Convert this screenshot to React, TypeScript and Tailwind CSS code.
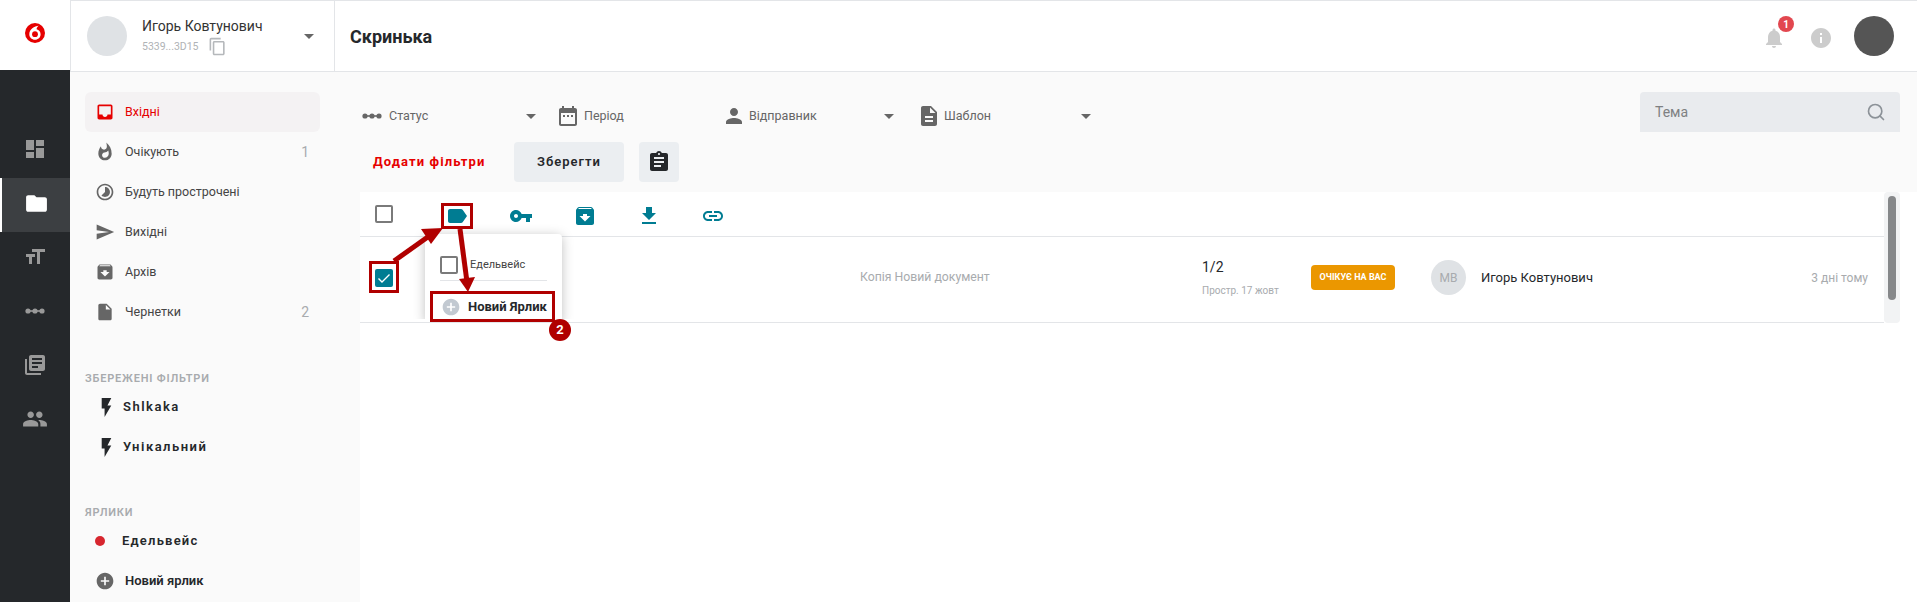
import React from 'react';
import { Search } from 'lucide-react';

const paths = {
  dashboard: 'M3 13h8V3H3v10zm0 8h8v-6H3v6zm10 0h8V11h-8v10zm0-18v6h8V3h-8z',
  folder: 'M10 4H4c-1.1 0-1.99.9-1.99 2L2 18c0 1.1.9 2 2 2h16c1.1 0 2-.9 2-2V8c0-1.1-.9-2-2-2h-8l-2-2z',
  size: 'M9 4v3h5v12h3V7h5V4H9zm-6 8h3v7h3v-7h3V9H3v3z',
  books: 'M4 6H2v14c0 1.1.9 2 2 2h14v-2H4V6zm16-4H8c-1.1 0-2 .9-2 2v12c0 1.1.9 2 2 2h12c1.1 0 2-.9 2-2V4c0-1.1-.9-2-2-2zm-1 9H9V9h10v2zm-4 4H9v-2h6v2zm4-8H9V5h10v2z',
  people: 'M16 11c1.66 0 2.99-1.34 2.99-3S17.66 5 16 5c-1.66 0-3 1.34-3 3s1.34 3 3 3zm-8 0c1.66 0 2.99-1.34 2.99-3S9.66 5 8 5C6.34 5 5 6.34 5 8s1.34 3 3 3zm0 2c-2.33 0-7 1.17-7 3.5V19h14v-2.5c0-2.33-4.67-3.5-7-3.5zm8 0c-.29 0-.62.02-.97.05 1.16.84 1.97 1.97 1.97 3.45V19h6v-2.5c0-2.33-4.67-3.5-7-3.5z',
  inbox: 'M19 3H5c-1.1 0-2 .9-2 2v14c0 1.1.9 2 2 2h14c1.1 0 2-.9 2-2V5c0-1.1-.9-2-2-2zm0 12h-4c0 1.66-1.35 3-3 3s-3-1.34-3-3H5V5h14v10z',
  fire: 'M13.5.67s.74 2.65.74 4.8c0 2.06-1.35 3.73-3.41 3.73-2.07 0-3.63-1.67-3.63-3.73l.03-.36C5.21 7.51 4 10.62 4 14c0 4.42 3.58 8 8 8s8-3.58 8-8C20 8.61 17.41 3.8 13.5.67zM11.71 19c-1.78 0-3.22-1.4-3.22-3.14 0-1.62 1.05-2.76 2.81-3.12 1.77-.36 3.6-1.21 4.62-2.58.39 1.29.59 2.65.59 4.04 0 2.65-2.15 4.8-4.8 4.8z',
  timelapse: 'M16.24 7.76C15.07 6.59 13.54 6 12 6v6l-4.24 4.24c2.34 2.34 6.14 2.34 8.49 0 2.34-2.34 2.34-6.14-.01-8.48zM12 2C6.48 2 2 6.48 2 12s4.48 10 10 10 10-4.48 10-10S17.52 2 12 2zm0 18c-4.42 0-8-3.58-8-8s3.58-8 8-8 8 3.58 8 8-3.58 8-8 8z',
  send: 'M2.01 21L23 12 2.01 3 2 10l15 2-15 2z',
  archive: 'M20.54 5.23l-1.39-1.68C18.88 3.21 18.47 3 18 3H6c-.47 0-.88.21-1.16.55L3.46 5.23C3.17 5.57 3 6.02 3 6.5V19c0 1.1.9 2 2 2h14c1.1 0 2-.9 2-2V6.5c0-.48-.17-.93-.46-1.27zM12 17.5L6.5 12H10v-2h4v2h3.5L12 17.5zM5.12 5l.81-1h12l.94 1H5.12z',
  draft: 'M6 2c-1.1 0-1.99.9-1.99 2L4 20c0 1.1.89 2 1.99 2H18c1.1 0 2-.9 2-2V8l-6-6H6zm7 7V3.5L18.5 9H13z',
  bolt: 'M7 2v11h3v9l7-12h-4l4-8z',
  plus: 'M12 2C6.48 2 2 6.48 2 12s4.48 10 10 10 10-4.48 10-10S17.52 2 12 2zm5 11h-4v4h-2v-4H7v-2h4V7h2v4h4v2z',
  calendar: 'M9 11H7v2h2v-2zm4 0h-2v2h2v-2zm4 0h-2v2h2v-2zm2-7h-1V2h-2v2H8V2H6v2H5c-1.11 0-1.99.9-1.99 2L3 20c0 1.1.89 2 2 2h14c1.1 0 2-.9 2-2V6c0-1.1-.9-2-2-2zm0 16H5V9h14v11z',
  person: 'M12 12c2.21 0 4-1.79 4-4s-1.79-4-4-4-4 1.79-4 4 1.79 4 4 4zm0 2c-2.67 0-8 1.34-8 4v2h16v-2c0-2.66-5.33-4-8-4z',
  template: 'M14 2H6c-1.1 0-1.99.9-1.99 2L4 20c0 1.1.89 2 1.99 2H18c1.1 0 2-.9 2-2V8l-6-6zm2 16H8v-2h8v2zm0-4H8v-2h8v2zm-3-5V3.5L18.5 9H13z',
  clipboard: 'M19 3h-4.18C14.4 1.84 13.3 1 12 1c-1.3 0-2.4.84-2.82 2H5c-1.1 0-2 .9-2 2v14c0 1.1.9 2 2 2h14c1.1 0 2-.9 2-2V5c0-1.1-.9-2-2-2zm-7 0c.55 0 1 .45 1 1s-.45 1-1 1-1-.45-1-1 .45-1 1-1zm2 14H7v-2h7v2zm3-4H7v-2h10v2zm0-4H7V7h10v2z',
  label: 'M17.63 5.84C17.27 5.33 16.67 5 16 5L5 5.01C3.9 5.01 3 5.9 3 7v10c0 1.1.9 1.99 2 1.99L16 19c.67 0 1.27-.33 1.63-.84L22 12l-4.37-6.16z',
  key: 'M12.65 10C11.83 7.67 9.61 6 7 6c-3.31 0-6 2.69-6 6s2.69 6 6 6c2.61 0 4.83-1.67 5.65-4H17v4h4v-4h2v-4H12.65zM7 14c-1.1 0-2-.9-2-2s.9-2 2-2 2 .9 2 2-.9 2-2 2z',
  download: 'M19 9h-4V3H9v6H5l7 7 7-7zM5 18v2h14v-2H5z',
  link: 'M3.9 12c0-1.71 1.39-3.1 3.1-3.1h4V7H7c-2.76 0-5 2.24-5 5s2.24 5 5 5h4v-1.9H7c-1.71 0-3.1-1.39-3.1-3.1zM8 13h8v-2H8v2zm9-6h-4v1.9h4c1.71 0 3.1 1.39 3.1 3.1s-1.39 3.1-3.1 3.1h-4V17h4c2.76 0 5-2.24 5-5s-2.24-5-5-5z',
  copy: 'M16 1H4c-1.1 0-2 .9-2 2v14h2V3h12V1zm3 4H8c-1.1 0-2 .9-2 2v14c0 1.1.9 2 2 2h11c1.1 0 2-.9 2-2V7c0-1.1-.9-2-2-2zm0 16H8V7h11v14z',
  bell: 'M12 22c1.1 0 2-.9 2-2h-4c0 1.1.89 2 2 2zm6-6v-5c0-3.07-1.64-5.64-4.5-6.32V4c0-.83-.67-1.5-1.5-1.5s-1.5.67-1.5 1.5v.68C7.63 5.36 6 7.92 6 11v5l-2 2v1h16v-1l-2-2z',
  info: 'M12 2C6.48 2 2 6.48 2 12s4.48 10 10 10 10-4.48 10-10S17.52 2 12 2zm1 15h-2v-6h2v6zm0-8h-2V7h2v2z',
};

const Icon = ({ name, className }: { name: keyof typeof paths; className: string }) => (
  <svg viewBox="0 0 24 24" fill="currentColor" className={className}>
    <path d={paths[name]} />
  </svg>
);

// three linked dots, used for the status filter and in the rail
const Dots = ({ className }: { className: string }) => (
  <svg viewBox="0 0 20 6" fill="currentColor" className={className}>
    <circle cx="3" cy="3" r="2.6" />
    <circle cx="10" cy="3" r="2.6" />
    <circle cx="17" cy="3" r="2.6" />
    <rect x="3" y="2.2" width="14" height="1.6" />
  </svg>
);

const Caret = () => <span className="h-0 w-0 border-x-[5px] border-t-[5px] border-x-transparent border-t-[#666]" />;

const Checkbox = ({ checked }: { checked?: boolean }) =>
  checked ? (
    <span className="flex h-[18px] w-[18px] items-center justify-center rounded-[2px] bg-[#007c92]">
      <svg viewBox="0 0 18 18" fill="none" stroke="#fff" strokeWidth="1.4" className="h-[18px] w-[18px]">
        <path d="M3.500 9.500l3.500 3.500 7.500-7.500" />
      </svg>
    </span>
  ) : (
    <span className="block h-[18px] w-[18px] rounded-[2px] border-2 border-[#7a7a7a] bg-white" />
  );

const railItems = [
  { icon: <Icon name="dashboard" className="h-[24px] w-[24px]" /> },
  { icon: <Icon name="folder" className="h-[25px] w-[25px] text-white" />, active: true },
  { icon: <Icon name="size" className="h-[24px] w-[24px]" /> },
  { icon: <Dots className="h-[6px] w-[20px]" /> },
  { icon: <Icon name="books" className="h-[24px] w-[24px]" /> },
  { icon: <Icon name="people" className="h-[26px] w-[26px]" /> },
];

const menuItems: { icon: keyof typeof paths; label: string; count?: string; active?: boolean }[] = [
  { icon: 'inbox', label: 'Вхідні', active: true },
  { icon: 'fire', label: 'Очікують', count: '1' },
  { icon: 'timelapse', label: 'Будуть прострочені' },
  { icon: 'send', label: 'Вихідні' },
  { icon: 'archive', label: 'Архів' },
  { icon: 'draft', label: 'Чернетки', count: '2' },
];

const toolbarIcons: (keyof typeof paths)[] = ['label', 'key', 'archive', 'download', 'link'];

const App = () => {
  return (
    <div className="relative flex h-[602px] w-full overflow-hidden bg-white font-['Roboto',sans-serif] text-[14px] text-[#25282b]">
      {/* Rail */}
      <div className="flex w-[70px] shrink-0 flex-col">
        <div className="flex h-[70px] items-center justify-center bg-white pb-[4px]">
          <svg viewBox="0 0 20 20" className="h-[20px] w-[20px]">
            <circle cx="10" cy="10" r="10" fill="#e60000" />
            <path d="M13.800 2.800C9.300 3.300 4.300 6.300 4.300 11.200c0 3.100 2.500 5.500 5.700 5.500 3.100 0 5.600-2.300 5.600-5.500 0-2.600-1.700-4.300-4-5 .1-1.500 1-2.700 2.200-3.400z" fill="#fff" />
            <circle cx="10" cy="11.200" r="2.900" fill="#e60000" />
          </svg>
        </div>
        <div className="flex-1 bg-[#25282b] pt-[54px] text-[#999]">
          {railItems.map((item, i) => (
            <div
              key={i}
              className={`flex h-[54px] items-center justify-center pb-[4px] ${item.active ? 'border-l-2 border-white bg-[#3c3f42]' : ''}`}
            >
              {item.icon}
            </div>
          ))}
        </div>
      </div>

      <div className="flex min-w-0 flex-1 flex-col">
        {/* Header */}
        <div className="flex h-[72px] shrink-0 border-y border-[#e3e5e8] bg-white">
          <div className="flex w-[265px] items-center border-x border-[#e3e5e8] pl-[16px] pr-[20px]">
            <span className="h-[40px] w-[40px] rounded-full bg-[#dfe2e5]" />
            <div className="ml-[15px] flex-1">
              <div className="text-[14px] leading-[20px] text-[#333]">Игорь Ковтунович</div>
              <div className="mt-[1px] flex items-center text-[10.5px] text-[#b0b3b6]">
                5339...3D15
                <Icon name="copy" className="ml-[9px] h-[19px] w-[19px] text-[#b5b8bb]" />
              </div>
            </div>
            <Caret />
          </div>
          <div className="flex flex-1 items-center pl-[15px] text-[18px] font-bold text-[#25282b]">Скринька</div>
          <div className="flex items-center pr-[23px]">
            <div className="relative mr-[23px] mt-[4px] h-[24px] w-[24px]">
              <Icon name="bell" className="h-[24px] w-[24px] text-[#ccc]" />
              <span className="absolute -right-[8px] -top-[10px] flex h-[16px] w-[16px] items-center justify-center rounded-full bg-[#e2474f] text-[10px] font-bold text-white">
                1
              </span>
            </div>
            <Icon name="info" className="mr-[21px] mt-[4px] h-[24px] w-[24px] text-[#ccc]" />
            <span className="h-[40px] w-[40px] rounded-full bg-[#555]" />
          </div>
        </div>

        <div className="flex min-h-0 flex-1">
          {/* Sidebar */}
          <div className="w-[290px] shrink-0 bg-[#fafafa] pl-[15px] pr-[40px] pt-[20px]">
            {menuItems.map((item) => (
              <div
                key={item.label}
                className={`flex h-[40px] items-center rounded-[6px] pl-[10px] pr-[11px] text-[12.5px] ${item.active ? 'bg-[#f4f2f3] text-[#e60000]' : 'text-[#444]'}`}
              >
                <Icon name={item.icon} className={`h-[20px] w-[20px] ${item.active ? 'text-[#e60000]' : 'text-[#666]'}`} />
                <span className="ml-[10px] flex-1">{item.label}</span>
                {item.count && <span className="text-[14px] text-[#a8abae]">{item.count}</span>}
              </div>
            ))}
            <div className="mt-[39px] text-[11px] font-semibold leading-[16px] tracking-[0.8px] text-[#a8abae]">ЗБЕРЕЖЕНІ ФІЛЬТРИ</div>
            {['Shlkaka', 'Унікальний'].map((name) => (
              <div key={name} className="flex h-[40px] items-center pl-[10px] text-[13px] font-semibold tracking-[1.5px]">
                <Icon name="bolt" className="h-[23px] w-[23px]" />
                <span className="ml-[5px]">{name}</span>
              </div>
            ))}
            <div className="mt-[38px] text-[11px] font-semibold leading-[16px] tracking-[0.8px] text-[#a8abae]">ЯРЛИКИ</div>
            <div className="flex h-[40px] items-center pl-[10px] text-[13px] font-semibold tracking-[1.2px]">
              <span className="h-[10px] w-[10px] rounded-full bg-[#d7262e]" />
              <span className="ml-[17px]">Едельвейс</span>
            </div>
            <div className="flex h-[40px] items-center pl-[10px] text-[13px] font-semibold">
              <Icon name="plus" className="h-[20px] w-[20px] text-[#666]" />
              <span className="ml-[10px]">Новий ярлик</span>
            </div>
          </div>

          {/* Main */}
          <div className="flex min-w-0 flex-1 flex-col">
            <div className="h-[120px] shrink-0 bg-[#fafafa] pr-[17px] pt-[20px]">
              <div className="flex h-[40px] items-start text-[12.5px] text-[#666]">
                <div className="mt-[12px] flex h-[24px] w-[196px] items-center pl-[2px] pr-[20px]">
                  <Dots className="h-[6px] w-[20px] text-[#666]" />
                  <span className="ml-[7px] flex-1">Статус</span>
                  <Caret />
                </div>
                <div className="mt-[12px] flex h-[24px] w-[166px] items-center">
                  <Icon name="calendar" className="h-[24px] w-[24px] text-[#666]" />
                  <span className="ml-[4px]">Період</span>
                </div>
                <div className="mt-[12px] flex h-[24px] w-[195px] items-center pr-[23px]">
                  <Icon name="person" className="h-[24px] w-[24px] text-[#666]" />
                  <span className="ml-[3px] flex-1">Відправник</span>
                  <Caret />
                </div>
                <div className="mt-[12px] flex h-[24px] w-[178px] items-center pr-[4px]">
                  <Icon name="template" className="h-[24px] w-[24px] text-[#666]" />
                  <span className="ml-[3px] flex-1">Шаблон</span>
                  <Caret />
                </div>
                <div className="ml-auto flex h-[40px] w-[260px] items-center justify-between rounded-t-[4px] bg-[#e9ebee] pl-[15px] pr-[14px] text-[14px] text-[#7e8082]">
                  Тема
                  <Search className="h-[20px] w-[20px] text-[#8c9298]" strokeWidth={2} />
                </div>
              </div>
              <div className="mt-[10px] flex h-[40px] items-center pl-[13px]">
                <span className="w-[141px] text-[13px] font-bold tracking-[1.1px] text-[#e60000]">Додати фільтри</span>
                <button className="h-[40px] w-[110px] rounded-[4px] bg-[#ebeef1] text-[13px] font-semibold tracking-[1px]">Зберегти</button>
                <button className="ml-[15px] flex h-[40px] w-[40px] items-center justify-center rounded-[4px] bg-[#ebeef1]">
                  <Icon name="clipboard" className="h-[24px] w-[24px]" />
                </button>
              </div>
            </div>

            <div className="flex pr-[17px]">
              <div className="min-w-0 flex-1">
                <div className="flex h-[45px] items-center border-b-[1px] border-[#e3e5e8]">
                  <div className="w-[65px] pl-[15px]">
                    <Checkbox />
                  </div>
                  {toolbarIcons.map((name) => (
                    <div key={name} className="flex w-[64px] justify-center pt-[3px]">
                      <Icon name={name} className="h-[24px] w-[24px] text-[#007c92]" />
                    </div>
                  ))}
                </div>
                <div className="relative flex h-[86px] items-center border-b-[1px] border-[#e3e5e8] pb-[4px]">
                  <div className="w-[500px] pl-[15px]">
                    <Checkbox checked />
                  </div>
                  <div className="w-[342px] text-[12.25px] text-[#a8abae]">Копія Новий документ</div>
                  <div className="w-[109px]">
                    <div className="text-[#25282b]">1/2</div>
                    <div className="mt-[5px] text-[10px] text-[#a8abae]">Простр. 17 жовт</div>
                  </div>
                  <div className="w-[120px]">
                    <span className="flex h-[25px] w-[84px] items-center justify-center rounded-[4px] bg-[#eb9700] text-[9px] font-bold text-white">
                      ОЧІКУЄ НА ВАС
                    </span>
                  </div>
                  <span className="flex h-[35px] w-[35px] items-center justify-center rounded-full bg-[#dfe2e5] text-[12px] text-[#a8abae]">МВ</span>
                  <span className="ml-[15px] flex-1 text-[13px]">Игорь Ковтунович</span>
                  <span className="pr-[16px] text-[12px] text-[#a8abae]">3 дні тому</span>

                  {/* Label popup */}
                  <div className="absolute -top-[3px] left-[65px] h-[88px] w-[137px] rounded-t-[4px] bg-white shadow-[0_2px_12px_rgba(0,0,0,0.25)] [clip-path:inset(-20px_-20px_3px_-20px)]">
                    <div className="mx-[15px] flex h-[47px] items-center border-b border-[#e3e5e8] pt-[16px]">
                      <Checkbox />
                      <span className="ml-[12px] text-[11px] text-[#444]">Едельвейс</span>
                    </div>
                    <div className="mt-[11px] flex h-[29px] items-center pl-[16px]">
                      <Icon name="plus" className="h-[20px] w-[20px] text-[#c2c9d1]" />
                      <span className="ml-[7px] text-[13px] font-bold">Новий Ярлик</span>
                    </div>
                  </div>
                </div>
              </div>
              <div className="flex h-[131px] w-[16px] shrink-0 justify-center rounded-[4px] bg-[#f2f3f4] pt-[4px]">
                <span className="h-[104px] w-[8px] rounded-full bg-[#86888a]" />
              </div>
            </div>
          </div>
        </div>
      </div>

      {/* Tutorial annotations */}
      <svg className="pointer-events-none absolute left-0 top-0 h-[602px] w-[1917px]" viewBox="0 0 1917 602" fill="none">
        <g stroke="#b00000" strokeWidth="3">
          <rect x="370.500" y="262.500" width="27" height="29" />
          <rect x="442.500" y="204.500" width="29" height="23" />
          <rect x="431.500" y="292.500" width="122" height="28" />
          <path d="M394 261L432 234" strokeWidth="5" />
          <path d="M460 229L467 282" strokeWidth="5" />
        </g>
        <path d="M443 228L431 244L421 229z" fill="#b00000" />
        <path d="M468 292L459 279L475 277z" fill="#b00000" />
      </svg>
      <span className="absolute left-[549px] top-[319px] flex h-[22px] w-[22px] items-center justify-center rounded-full bg-[#b00000] text-[13px] font-bold text-white">
        2
      </span>
    </div>
  );
};

export default App;
